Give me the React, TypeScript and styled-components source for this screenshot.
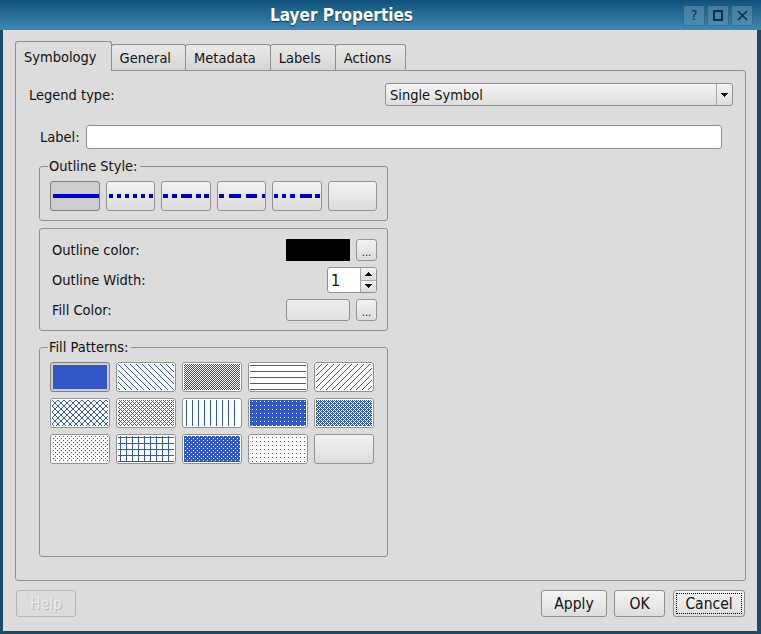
import React from "react";
import styled, { createGlobalStyle, css } from "styled-components";

const FRAME = "#1c4b65";
const BG = "#dcdcdc";
const LINE = "#8e8e8e";
const BLUE = "#3457c8";
const PEN = "#0000c8";

const GlobalStyle = createGlobalStyle`
  html, body { margin: 0; padding: 0; }
  body {
    background: ${FRAME};
    font-family: "DejaVu Sans Condensed", "DejaVu Sans", sans-serif;
    font-stretch: condensed;
    font-size: 14.5px;
    color: #111;
  }
  *, *::before, *::after { box-sizing: border-box; }
  button { font: inherit; color: inherit; }
`;

const Window = styled.div`
  width: 761px;
  height: 634px;
  display: flex;
  flex-direction: column;
  background: ${FRAME};
  border-radius: 4px 4px 0 0;
  overflow: hidden;
`;

const TitleBar = styled.div`
  flex: none;
  height: 30px;
  display: flex;
  align-items: center;
  padding-right: 8px;
  background: linear-gradient(#11527b, #3d89b3);
`;

const Title = styled.div`
  flex: 1;
  text-align: center;
  color: #fff;
  font-weight: bold;
  font-size: 17px;
  text-shadow: 0 1px 1px rgba(0, 0, 0, 0.55);
`;

const TitleButtons = styled.div`
  display: flex;
  gap: 2px;
`;

const TitleButton = styled.div`
  width: 22px;
  height: 21px;
  display: flex;
  align-items: center;
  justify-content: center;
  border: 1px solid rgba(8, 40, 64, 0.3);
  border-radius: 3px;
  background: linear-gradient(rgba(255, 255, 255, 0.2), rgba(255, 255, 255, 0.1));
  color: #0c3049;
  font-size: 14px;
`;

const Frame = styled.div`
  flex: 1;
  display: flex;
  flex-direction: column;
  background: ${BG};
  border: solid ${FRAME};
  border-width: 0 4px 3px 3px;
  padding: 11px 11px 14px 12px;
`;

const TabBar = styled.div`
  flex: none;
  height: 30px;
  margin-bottom: -1px;
  display: flex;
  align-items: flex-end;
  position: relative;
  z-index: 1;
`;

const Tab = styled.div<{ $active?: boolean }>`
  display: flex;
  align-items: center;
  border: 1px solid ${LINE};
  border-bottom: none;
  border-radius: 3px 3px 0 0;
  ${(p) =>
    p.$active
      ? css`
          height: 30px;
          padding: 0 14px 0 8px;
          background: ${BG};
        `
      : css`
          height: 26px;
          padding: 0 14px 0 8px;
          margin-bottom: 1px;
          margin-left: -1px;
          background: linear-gradient(#e9e9e9, #d6d6d6);
        `}
`;

const Panel = styled.div`
  flex: 1;
  display: flex;
  flex-direction: column;
  border: 1px solid ${LINE};
  border-radius: 0 3px 3px 3px;
  padding: 12px 12px 0 13px;
`;

const LegendRow = styled.div`
  height: 23px;
  display: flex;
  align-items: center;
  justify-content: space-between;
`;

const Combo = styled.div`
  width: 348px;
  height: 23px;
  display: flex;
  border: 1px solid ${LINE};
  border-radius: 3px;
  background: linear-gradient(#f4f4f4, #dedede);
`;

const ComboText = styled.div`
  flex: 1;
  display: flex;
  align-items: center;
  padding-left: 4px;
`;

const ComboArrow = styled.div`
  width: 16px;
  display: flex;
  align-items: center;
  justify-content: center;
  border-left: 1px solid #a8a8a8;
`;

const Inner = styled.div`
  display: flex;
  flex-direction: column;
  margin: 19px 11px 0 10px;
`;

const LabelRow = styled.div`
  height: 24px;
  display: flex;
  align-items: center;
  gap: 6px;
  padding-left: 1px;
`;

const TextInput = styled.div`
  flex: 1;
  height: 24px;
  border: 1px solid ${LINE};
  border-radius: 3px;
  background: #fff;
`;

const GroupBox = styled.fieldset<{ $top: number; $height?: number }>`
  margin: ${(p) => p.$top}px 0 0 0;
  width: 349px;
  min-width: 0;
  border: 1px solid ${LINE};
  border-radius: 3px;
  padding: 7px 10px 9px 10px;
  ${(p) => p.$height && css`height: ${p.$height}px;`}
`;

const GroupTitle = styled.legend`
  margin-left: -2px;
  padding: 0 2px 0 1px;
  line-height: 15px;
`;

const PlainGroup = styled.div`
  margin-top: 7px;
  width: 349px;
  border: 1px solid ${LINE};
  border-radius: 3px;
  padding: 10px 10px 9px 12px;
  display: flex;
  flex-direction: column;
  gap: 6px;
`;

const StyleRow = styled.div`
  display: flex;
  gap: 6px;
`;

const ToolButton = styled.button<{ $pressed?: boolean; $w: number }>`
  width: ${(p) => p.$w}px;
  height: 30px;
  padding: 0;
  border: 1px solid ${(p) => (p.$pressed ? "#808080" : "#939393")};
  border-radius: 3px;
  background: ${(p) => (p.$pressed ? "#cdcdcd" : "linear-gradient(#f3f3f3, #dcdcdc)")};
  display: block;
  overflow: hidden;
`;

const PatternFace = styled.div<{ $pressed?: boolean; $empty?: boolean }>`
  width: 100%;
  height: 100%;
  padding: ${(p) => (p.$pressed ? "2px" : "1px")};
  background: ${(p) => (p.$empty ? "transparent" : p.$pressed ? "#cdcdcd" : "#fff")};
  border-radius: 2px;
  svg { display: block; }
`;

const PatternGrid = styled.div`
  display: grid;
  grid-template-columns: repeat(5, 60px);
  grid-auto-rows: 30px;
  gap: 6px;
`;

const PropRow = styled.div<{ $h: number }>`
  height: ${(p) => p.$h}px;
  display: flex;
  align-items: center;
  gap: 6px;
`;

const PropLabel = styled.span`
  flex: 1;
`;

const Swatch = styled.div<{ $color: string; $framed?: boolean }>`
  width: 64px;
  height: 22px;
  background: ${(p) => p.$color};
  ${(p) =>
    p.$framed &&
    css`
      border: 1px solid ${LINE};
      border-radius: 3px;
      background: linear-gradient(#ececec, #e2e2e2);
    `}
`;

const DotsButton = styled.button`
  width: 21px;
  height: 22px;
  padding: 5px 0 0 0;
  border: 1px solid #939393;
  border-radius: 3px;
  background: linear-gradient(#f3f3f3, #dcdcdc);
  font-size: 11px;
  line-height: 10px;
  display: flex;
  align-items: center;
  justify-content: center;
`;

const SpinBox = styled.div`
  width: 50px;
  height: 26px;
  display: flex;
  border: 1px solid ${LINE};
  border-radius: 3px;
  background: #fff;
  overflow: hidden;
`;

const SpinText = styled.div`
  flex: 1;
  display: flex;
  align-items: center;
  padding-left: 3px;
  font-size: 16px;
`;

const SpinArrows = styled.div`
  width: 16px;
  display: flex;
  flex-direction: column;
  border-left: 1px solid #a8a8a8;
`;

const SpinHalf = styled.div<{ $down?: boolean }>`
  flex: 1;
  display: flex;
  align-items: center;
  justify-content: center;
  background: linear-gradient(#f3f3f3, #dcdcdc);
  ${(p) => p.$down && css`border-top: 1px solid #a8a8a8;`}
`;

const ButtonRow = styled.div`
  flex: none;
  height: 27px;
  margin-top: 9px;
  display: flex;
`;

const Spacer = styled.div`
  flex: 1;
`;

const PushButton = styled.button<{ $w: number; $ml?: number; $mr?: number; $focus?: boolean; $disabled?: boolean }>`
  width: ${(p) => p.$w}px;
  height: 27px;
  margin-left: ${(p) => p.$ml ?? 0}px;
  margin-right: ${(p) => p.$mr ?? 0}px;
  padding: 0;
  border: 1px solid ${(p) => (p.$disabled ? "#b6b6b6" : "#8d8d8d")};
  border-radius: 3px;
  background: ${(p) => (p.$disabled ? BG : "linear-gradient(#f4f4f4, #dddddd)")};
  font-size: 15.5px;
  ${(p) =>
    p.$disabled &&
    css`
      color: #ececec;
      text-shadow: 1px 1px 0 #b8b8b8;
    `}
  ${(p) =>
    p.$focus &&
    css`
      outline: 1px dotted #000;
      outline-offset: -4px;
    `}
`;

/* ---------- drawings ---------- */

const Tri = ({ up }: { up?: boolean }) => (
  <svg width="7" height="4" viewBox="0 0 7 4" shapeRendering="crispEdges">
    <path d={up ? "M3.5 0 L7 4 L0 4 Z" : "M0 0 L7 0 L3.5 4 Z"} fill="#111" />
  </svg>
);

type Seg = [number, number];
const LINES: Seg[][] = [
  [[2, 46]],
  [[2, 4], [10, 4], [18, 4], [26, 4], [34, 4], [42, 4]],
  [[1, 5], [10, 5], [19, 11], [34, 5], [42, 5]],
  [[1, 5], [11, 12], [28, 11], [44, 4]],
  [[1, 4], [9, 4], [17, 5], [27, 12], [42, 5]],
  [],
];

const PenLine = ({ segs }: { segs: Seg[] }) => (
  <svg width="48" height="28" viewBox="0 0 48 28" shapeRendering="crispEdges" style={{ display: "block" }}>
    {segs.map(([x, w], i) => (
      <rect key={i} x={x} y={12} width={w} height={4} fill={PEN} />
    ))}
  </svg>
);

const QT: Record<string, number[]> = {
  dense1: [0x00, 0x44, 0x00, 0x00, 0x00, 0x44, 0x00, 0x00],
  dense2: [0x88, 0x00, 0x22, 0x00, 0x88, 0x00, 0x22, 0x00],
  dense3: [0xaa, 0x44, 0xaa, 0x11, 0xaa, 0x44, 0xaa, 0x11],
  dense4: [0x55, 0xaa, 0x55, 0xaa, 0x55, 0xaa, 0x55, 0xaa],
  dense5: [0x55, 0xbb, 0x55, 0xee, 0x55, 0xbb, 0x55, 0xee],
  dense6: [0x77, 0xff, 0xdd, 0xff, 0x77, 0xff, 0xdd, 0xff],
  dense7: [0xff, 0xbb, 0xff, 0xff, 0xff, 0xbb, 0xff, 0xff],
};

function patternPixels(kind: string): { size: number; d: string } {
  const pts: [number, number][] = [];
  let size = 8;
  if (QT[kind]) {
    QT[kind].forEach((b, y) => {
      for (let x = 0; x < 8; x++) if (((b >> x) & 1) === 0) pts.push([x, y]);
    });
  } else {
    size = 6;
    for (let y = 0; y < size; y++)
      for (let x = 0; x < size; x++) {
        const h = y === 1;
        const v = x === 2;
        const f = x === y;
        const b = x === size - 1 - y;
        const on =
          kind === "hor" ? h :
          kind === "ver" ? v :
          kind === "cross" ? h || v :
          kind === "fdiag" ? f :
          kind === "bdiag" ? b :
          kind === "dcross" ? f || b : false;
        if (on) pts.push([x, y]);
      }
  }
  return { size, d: pts.map(([x, y]) => `M${x} ${y}h1v1h-1z`).join("") };
}

const PatternSwatch = ({ kind, w, h }: { kind: string; w: number; h: number }) => {
  if (kind === "none") return null;
  if (kind === "solid")
    return (
      <svg width={w} height={h} shapeRendering="crispEdges">
        <rect width={w} height={h} fill={BLUE} />
      </svg>
    );
  const { size, d } = patternPixels(kind);
  const id = `pat-${kind}`;
  const color = kind === "dense4" ? "#2a44a6" : BLUE;
  return (
    <svg width={w} height={h} shapeRendering="crispEdges">
      <defs>
        <pattern id={id} width={size} height={size} patternUnits="userSpaceOnUse">
          <path d={d} fill={color} />
        </pattern>
      </defs>
      <rect width={w} height={h} fill={`url(#${id})`} />
    </svg>
  );
};

const PATTERNS = [
  "solid", "fdiag", "dense4", "hor", "bdiag",
  "dcross", "dense5", "ver", "dense1", "dense3",
  "dense6", "cross", "dense2", "dense7", "none",
];

export default function App() {
  return (
    <>
      <GlobalStyle />
      <Window>
        <TitleBar>
          <Title>Layer Properties</Title>
          <TitleButtons>
            <TitleButton>?</TitleButton>
            <TitleButton>
              <svg width="10" height="11" viewBox="0 0 10 11">
                <rect x="1" y="1" width="8" height="9" fill="none" stroke="#0c3049" strokeWidth="2" />
              </svg>
            </TitleButton>
            <TitleButton>
              <svg width="11" height="11" viewBox="0 0 11 11">
                <path d="M1 1 L10 10 M10 1 L1 10" stroke="#0c3049" strokeWidth="1.6" />
              </svg>
            </TitleButton>
          </TitleButtons>
        </TitleBar>
        <Frame>
          <TabBar>
            <Tab $active>Symbology</Tab>
            <Tab>General</Tab>
            <Tab>Metadata</Tab>
            <Tab>Labels</Tab>
            <Tab>Actions</Tab>
          </TabBar>
          <Panel>
            <LegendRow>
              <span>Legend type:</span>
              <Combo>
                <ComboText>Single Symbol</ComboText>
                <ComboArrow>
                  <Tri />
                </ComboArrow>
              </Combo>
            </LegendRow>
            <Inner>
              <LabelRow>
                <span>Label:</span>
                <TextInput />
              </LabelRow>

              <GroupBox $top={10}>
                <GroupTitle>Outline Style:</GroupTitle>
                <StyleRow>
                  {LINES.map((segs, i) => (
                    <ToolButton key={i} $w={50} $pressed={i === 0}>
                      <PenLine segs={segs} />
                    </ToolButton>
                  ))}
                </StyleRow>
              </GroupBox>

              <PlainGroup>
                <PropRow $h={22}>
                  <PropLabel>Outline color:</PropLabel>
                  <Swatch $color="#000" />
                  <DotsButton>...</DotsButton>
                </PropRow>
                <PropRow $h={26}>
                  <PropLabel>Outline Width:</PropLabel>
                  <SpinBox>
                    <SpinText>1</SpinText>
                    <SpinArrows>
                      <SpinHalf>
                        <Tri up />
                      </SpinHalf>
                      <SpinHalf $down>
                        <Tri />
                      </SpinHalf>
                    </SpinArrows>
                  </SpinBox>
                </PropRow>
                <PropRow $h={22}>
                  <PropLabel>Fill Color:</PropLabel>
                  <Swatch $color="#e6e6e6" $framed />
                  <DotsButton>...</DotsButton>
                </PropRow>
              </PlainGroup>

              <GroupBox $top={9} $height={217}>
                <GroupTitle>Fill Patterns:</GroupTitle>
                <PatternGrid>
                  {PATTERNS.map((k, i) => (
                    <ToolButton key={k} $w={60} $pressed={i === 0}>
                      <PatternFace $pressed={i === 0} $empty={k === "none"}>
                        <PatternSwatch kind={k} w={i === 0 ? 54 : 56} h={i === 0 ? 24 : 26} />
                      </PatternFace>
                    </ToolButton>
                  ))}
                </PatternGrid>
              </GroupBox>
            </Inner>
          </Panel>
          <ButtonRow>
            <PushButton $w={60} $ml={1} $disabled>
              Help
            </PushButton>
            <Spacer />
            <PushButton $w={66}>Apply</PushButton>
            <PushButton $w={51} $ml={7}>
              OK
            </PushButton>
            <PushButton $w={72} $ml={8} $mr={1} $focus>
              Cancel
            </PushButton>
          </ButtonRow>
        </Frame>
      </Window>
    </>
  );
}
